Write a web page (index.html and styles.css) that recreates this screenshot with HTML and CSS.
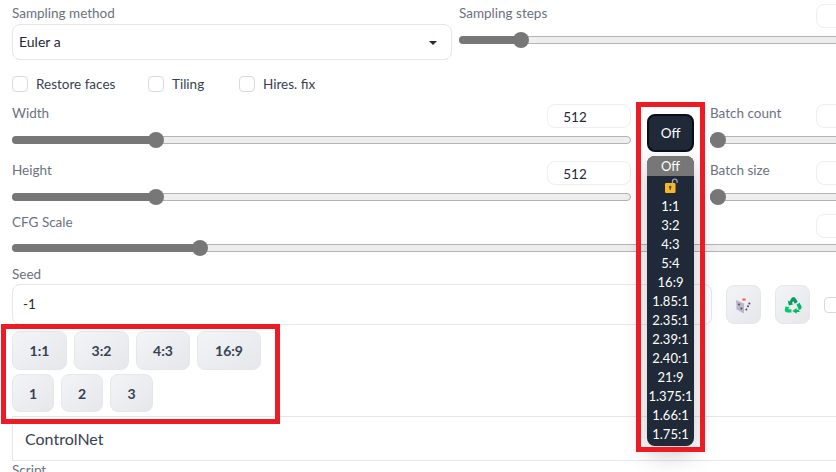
FILE: index.html
```html
<!DOCTYPE html>
<html lang="en">
<head>
    <meta charset="UTF-8">
    <title>txt2img</title>
    <link rel="stylesheet" href="styles.css">
</head>
<body>

<div class="page">
    <div class="top-row">
        <div>
            <div class="label">Sampling method</div>
            <div class="select">Euler a<span class="caret"></span></div>
        </div>
        <div class="steps">
            <div class="label-row">
                <div class="label">Sampling steps</div>
                <div class="num"></div>
            </div>
            <div class="slider steps-slider"><div class="fill" style="width: 62px"></div></div>
        </div>
    </div>

    <div class="checks">
        <label class="check"><span class="box"></span>Restore faces</label>
        <label class="check"><span class="box"></span>Tiling</label>
        <label class="check"><span class="box"></span>Hires. fix</label>
    </div>

    <div class="size-row">
        <div class="size-col">
            <div class="field">
                <div class="label-row">
                    <div class="label">Width</div>
                    <div class="num">512</div>
                </div>
                <div class="slider"><div class="fill" style="width: 144px"></div></div>
            </div>
            <div class="field">
                <div class="label-row">
                    <div class="label">Height</div>
                    <div class="num">512</div>
                </div>
                <div class="slider"><div class="fill" style="width: 144px"></div></div>
            </div>
        </div>

        <div class="ratio-col">
            <button class="ratio-btn">Off</button>
            <ul class="ratio-menu">
                <li class="active">Off</li>
                <li class="lock-item">
                    <svg class="lock" width="15" height="15" viewBox="0 0 15 15">
                        <path d="M8.5 6V3.4a2.3 2.3 0 0 1 4.6 0V5" fill="none" stroke="#9aa0a8" stroke-width="1.3"/>
                        <rect x="1" y="5" width="10.5" height="10" rx="1.2" fill="#f7b72c"/>
                        <circle cx="6.2" cy="9" r="1.3" fill="#5f4a2a"/>
                        <rect x="5.6" y="9.4" width="1.2" height="2.6" fill="#5f4a2a"/>
                    </svg>
                </li>
                <li>1:1</li>
                <li>3:2</li>
                <li>4:3</li>
                <li>5:4</li>
                <li>16:9</li>
                <li>1.85:1</li>
                <li>2.35:1</li>
                <li>2.39:1</li>
                <li>2.40:1</li>
                <li>21:9</li>
                <li>1.375:1</li>
                <li>1.66:1</li>
                <li>1.75:1</li>
            </ul>
        </div>

        <div class="batch-col">
            <div class="field">
                <div class="label-row">
                    <div class="label">Batch count</div>
                    <div class="num"></div>
                </div>
                <div class="slider"><div class="fill" style="width: 8px"></div></div>
            </div>
            <div class="field">
                <div class="label-row">
                    <div class="label">Batch size</div>
                    <div class="num"></div>
                </div>
                <div class="slider"><div class="fill" style="width: 8px"></div></div>
            </div>
        </div>
    </div>

    <div class="cfg">
        <div class="label-row">
            <div class="label">CFG Scale</div>
            <div class="num"></div>
        </div>
        <div class="slider"><div class="fill" style="width: 188px"></div></div>
    </div>

    <div class="seed">
        <div class="label">Seed</div>
        <div class="seed-row">
            <div class="seed-input">-1</div>
            <button class="icon-btn">
                <svg width="20" height="20" viewBox="0 0 20 20">
                    <path d="M10 1.5 18 5 10 8.5 2 5Z" fill="#f3eef0"/>
                    <path d="M2 5 10 8.5V18.5L2.6 14.5Z" fill="#b9b6cb"/>
                    <path d="M18 5 10 8.5V18.5L17.4 14.5Z" fill="#eceaf0"/>
                    <ellipse cx="10" cy="4.6" rx="2" ry="1.4" fill="#f0727c"/>
                    <circle cx="5" cy="9.5" r="1" fill="#4c4a63"/>
                    <circle cx="7.4" cy="13.6" r="1" fill="#4c4a63"/>
                    <circle cx="15.4" cy="8.6" r="1" fill="#4c4a63"/>
                    <circle cx="14" cy="11.2" r="1" fill="#4c4a63"/>
                    <circle cx="12.4" cy="14.4" r="1" fill="#4c4a63"/>
                </svg>
            </button>
            <button class="icon-btn recycle">
                <svg width="18" height="18" viewBox="0 0 18 18">
                    <path d="M9 1.2c-.7 0-1.2.3-1.6 1L5.6 5.4 3.8 4.6l1 5 4.8-1.4-1.7-.9 1.3-2.3 1.6 2.7 2.9-1.7-1.8-3.2c-.5-1-1-1.6-1.9-1.6Z" fill="#0b9a62"/>
                    <path d="M1.5 10.4.8 13.6c-.3 1.4.8 2.8 2.2 2.8h4.4v-3.2H4.2l1.3-2.3-4-.5Z" fill="#00c96f"/>
                    <path d="M12.6 8.4l2.9-1.7 1.8 3.4c.9 1.8-.3 3.7-2 3.7h-2.6V12L8.4 14.9l4.3 2.9v-1.7c.8 0 2.6.1 3-.2" fill="#00b866"/>
                </svg>
            </button>
            <span class="box"></span>
        </div>
    </div>

    <div class="presets">
        <div class="preset-row">
            <button class="preset p1">1:1</button>
            <button class="preset p1">3:2</button>
            <button class="preset p2">4:3</button>
            <button class="preset p3">16:9</button>
        </div>
        <div class="preset-row">
            <button class="preset p4">1</button>
            <button class="preset p4">2</button>
            <button class="preset p5">3</button>
        </div>
    </div>

    <div class="accordion">ControlNet</div>
    <div class="label">Script</div>
</div>

<div class="mark mark-presets"></div>
<div class="mark mark-ratios"></div>

</body>
</html>
```

FILE: styles.css
```css
* {
    box-sizing: border-box;
}

html, body {
    height: 472px;
    overflow: hidden;
}

body {
    position: relative;
    margin: 0;
    background-color: #fff;
    font-family: "Lato", sans-serif;
    font-size: 13.5px;
    color: #374151;
}

.page {
    width: 900px;
    padding: 4px 0 0 12px;
}

.label {
    height: 18px;
    line-height: 18px;
    color: #6b7280;
}

.label-row {
    display: flex;
    justify-content: space-between;
    align-items: flex-start;
    height: 24px;
}

.num {
    width: 84px;
    height: 24px;
    line-height: 24px;
    padding-right: 28px;
    text-align: center;
    color: #1f2937;
    background-color: #fff;
    border: 1px solid #eceef1;
    border-radius: 8px;
}

.top-row {
    display: grid;
    grid-template-columns: 440px 1fr;
    column-gap: 7px;
    height: 72px;
}

.select {
    position: relative;
    height: 36px;
    margin-top: 2px;
    padding-left: 6px;
    line-height: 34px;
    font-size: 14px;
    color: #1f2937;
    border: 1px solid #e5e7eb;
    border-radius: 8px;
}

.caret {
    position: absolute;
    right: 14px;
    top: 16px;
    border-left: 4px solid transparent;
    border-right: 4px solid transparent;
    border-top: 4px solid #1f2937;
}

.steps .slider {
    margin-top: 8px;
}

.checks {
    display: flex;
    height: 16px;
}

.check {
    display: flex;
    align-items: center;
    line-height: 16px;
    color: #374151;
}

.check:nth-child(1) {
    width: 136px;
}

.check:nth-child(2) {
    width: 91px;
}

.box {
    flex: none;
    width: 16px;
    height: 16px;
    margin-right: 8px;
    background-color: #fff;
    border: 1px solid #d7dae0;
    border-radius: 4px;
}

.slider {
    position: relative;
    height: 8px;
    margin-top: 8px;
    background-color: #eee;
    border: 1px solid #b4b4b4;
    border-radius: 4px;
}

.fill {
    position: relative;
    height: 8px;
    margin: -1px 0 0 -1px;
    background-color: #777;
    border-radius: 4px 0 0 4px;
}

.fill::after {
    content: "";
    position: absolute;
    right: -8px;
    top: -4px;
    width: 16px;
    height: 16px;
    background-color: #777;
    border-radius: 50%;
}

.size-row {
    display: flex;
    margin-top: 12px;
    height: 110px;
}

.size-col {
    width: 619px;
}

.field {
    height: 57px;
}

.ratio-col {
    position: relative;
    width: 47px;
    margin: 0 16px;
    padding-top: 10px;
}

.ratio-btn {
    display: block;
    width: 47px;
    height: 38px;
    padding: 0;
    font: inherit;
    color: #fff;
    background-color: #1f2937;
    border: 2px solid #0b0f19;
    border-radius: 8px;
}

.ratio-menu {
    position: absolute;
    z-index: 2;
    top: 52px;
    left: 0;
    width: 47px;
    margin: 0;
    padding: 0 0 2px;
    list-style: none;
    text-align: center;
    font-size: 13px;
    color: #fff;
    background-color: #1f2937;
    border-radius: 8px;
    overflow: hidden;
    box-shadow: 0 8px 24px rgba(0, 0, 0, 0.22);
}

.ratio-menu li {
    height: 19px;
    line-height: 18px;
    white-space: nowrap;
}

.ratio-menu .active {
    height: 20px;
    line-height: 20px;
    background-color: #777;
}

.ratio-menu .lock-item {
    height: 19px;
}

.lock {
    display: block;
    margin: 2px 0 0 17px;
}

.batch-col {
    width: 190px;
}

.cfg {
    height: 51px;
}

.cfg .label {
    margin-top: -1px;
}

.cfg .slider {
    margin-top: 6px;
}

.seed-row {
    display: flex;
    align-items: center;
    margin-top: 1px;
}

.seed-input {
    width: 700px;
    height: 41px;
    padding-left: 10px;
    line-height: 39px;
    color: #1f2937;
    border: 1px solid #e5e7eb;
    border-radius: 8px;
}

.icon-btn {
    display: flex;
    align-items: center;
    justify-content: center;
    width: 35px;
    height: 39px;
    margin-left: 14px;
    padding: 0;
    background: linear-gradient(to bottom right, #f3f4f6, #e5e7eb);
    border: 1px solid #e5e7eb;
    border-radius: 8px;
}

.seed-row .box {
    margin-left: 14px;
}

.presets {
    display: flex;
    flex-direction: column;
    gap: 4px;
    margin-top: 6px;
}

.preset-row {
    display: flex;
    gap: 7px;
}

.preset {
    height: 39px;
    padding: 0;
    font: inherit;
    font-size: 14px;
    font-weight: 700;
    color: #374151;
    background: linear-gradient(to bottom right, #f3f4f6, #e5e7eb);
    border: 1px solid #e5e7eb;
    border-radius: 8px;
}

.preset-row:last-child .preset {
    height: 38px;
}

.p1 { width: 55px; }
.p2 { width: 54px; }
.p3 { width: 64px; }
.p4 { width: 42px; }
.p5 { width: 43px; }

.accordion {
    width: 888px;
    height: 45px;
    margin-top: 4px;
    padding-left: 12px;
    line-height: 43px;
    font-size: 16px;
    color: #374151;
    border: 1px solid #e5e7eb;
}

.mark {
    position: absolute;
    z-index: 3;
    border: 5px solid #ed1c24;
    pointer-events: none;
}

.mark-presets {
    left: 1px;
    top: 324px;
    width: 279px;
    height: 100px;
}

.mark-ratios {
    left: 636px;
    top: 102px;
    width: 69px;
    height: 350px;
}
```
